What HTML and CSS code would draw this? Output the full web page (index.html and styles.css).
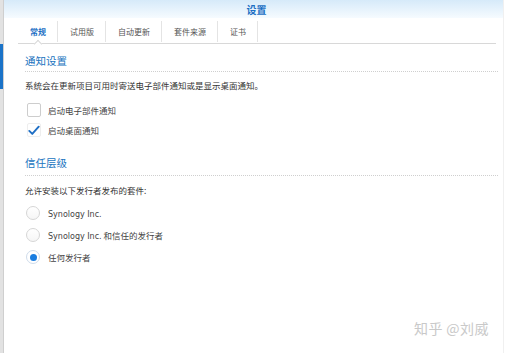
FILE: index.html
```html
<!DOCTYPE html>
<html lang="zh-CN">
<head>
<meta charset="utf-8">
<title>设置</title>
<link rel="stylesheet" href="styles.css">
</head>
<body>
<div class="window">
  <div class="edge"><div class="edge-active"></div></div>
  <div class="main">
    <div class="titlebar">设置</div>
    <div class="tabs">
      <div class="tab active">常规</div>
      <div class="tab">试用版</div>
      <div class="tab">自动更新</div>
      <div class="tab">套件来源</div>
      <div class="tab">证书</div>
    </div>
    <div class="content">
      <div class="section-title first">通知设置</div>
      <div class="desc">系统会在更新项目可用时寄送电子部件通知或是显示桌面通知。</div>
      <div class="row">
        <span class="checkbox"></span>
        <span class="label">启动电子部件通知</span>
      </div>
      <div class="row">
        <span class="checkbox checked">
          <svg width="14" height="13" viewBox="0 0 14 13"><path d="M1.5 7 L5 10.5 L12.5 2" fill="none" stroke="#1f6fc5" stroke-width="2.2" stroke-linecap="round" stroke-linejoin="round"/></svg>
        </span>
        <span class="label">启动桌面通知</span>
      </div>

      <div class="section-title second">信任层级</div>
      <div class="desc desc2">允许安装以下发行者发布的套件:</div>
      <div class="radio-row first-radio">
        <span class="radio"></span>
        <span class="label"><span class="latin">Synology Inc.</span></span>
      </div>
      <div class="radio-row">
        <span class="radio"></span>
        <span class="label"><span class="latin">Synology Inc.</span> 和信任的发行者</span>
      </div>
      <div class="radio-row">
        <span class="radio selected"><span class="dot"></span></span>
        <span class="label">任何发行者</span>
      </div>
    </div>
  </div>
  <div class="watermark">知乎 @刘威</div>
</div>
</body>
</html>
```

FILE: styles.css
```css
html, body {
  margin: 0;
  padding: 0;
  background: #ffffff;
}

body {
  width: 510px;
  height: 353px;
  overflow: hidden;
  font-family: "Liberation Sans", "Noto Sans CJK SC", sans-serif;
  color: #333;
}

.window {
  position: relative;
  display: flex;
  flex-direction: row;
  width: 510px;
  height: 353px;
}

.edge {
  width: 3px;
  flex: 0 0 3px;
  background: #e2e2e2;
  border-right: 1px solid #cfcfcf;
}

.edge-active {
  margin-top: 44px;
  height: 45px;
  background: #1b73c8;
}

.main {
  flex: 1;
  display: flex;
  flex-direction: column;
  border-right: 1px solid #f0f0f0;
  margin-right: 6px;
}

.titlebar {
  height: 18px;
  line-height: 20px;
  text-align: center;
  padding-left: 6px;
  font-family: "Noto Sans CJK SC", sans-serif;
  font-size: 10px;
  font-weight: bold;
  color: #1b6fc4;
  background: linear-gradient(#d6eaf9, #f6fbff);
}

.tabs {
  display: flex;
  flex-direction: row;
  height: 25px;
  margin-left: 14px;
  margin-right: 7px;
  border-bottom: 1px solid #d8d8d8;
  align-items: center;
}

.tab {
  position: relative;
  height: 21px;
  line-height: 21px;
  padding: 0 11px 0 12px;
  border-right: 1px solid #e4e4e4;
  font-family: "Noto Sans CJK SC", sans-serif;
  font-size: 8px;
  color: #555;
  margin-top: 1px;
}

.tab.active {
  color: #1b6fc4;
  font-weight: bold;
}

.tab.active::after {
  content: "";
  position: absolute;
  left: 17px;
  bottom: -5px;
  width: 5px;
  height: 5px;
  background: #fff;
  border-left: 1px solid #d8d8d8;
  border-top: 1px solid #d8d8d8;
  transform: rotate(45deg);
}

.content {
  display: flex;
  flex-direction: column;
  padding-left: 21px;
  padding-right: 5px;
}

.section-title {
  font-family: "Noto Sans CJK SC", sans-serif;
  font-size: 10.5px;
  line-height: 14px;
  color: #2174c0;
  padding-bottom: 3px;
  border-bottom: 1px dotted #cfcfcf;
}

.section-title.first {
  margin-top: 10px;
}

.section-title.second {
  margin-top: 16px;
  padding-bottom: 5px;
}

.desc {
  font-family: "Noto Sans CJK SC", sans-serif;
  font-size: 8.5px;
  line-height: 12px;
  color: #333;
  margin-top: 7px;
}

.desc2 {
  margin-top: 8px;
}

.row {
  display: flex;
  flex-direction: row;
  align-items: center;
  height: 20px;
  padding-left: 2px;
}

.desc + .row {
  margin-top: 9px;
}

.checkbox {
  width: 12px;
  height: 12px;
  border: 1px solid #cdcdcd;
  border-radius: 2px;
  background: #fff;
  display: flex;
  align-items: center;
  justify-content: center;
  flex: 0 0 auto;
}

.checkbox.checked {
  border-color: #eeeeee;
}

.checkbox svg {
  display: block;
}

.label {
  margin-left: 7px;
  font-family: "Noto Sans CJK SC", sans-serif;
  font-size: 8.5px;
  color: #444;
}

.latin {
  font-family: "DejaVu Sans", "Noto Sans CJK SC", sans-serif;
  font-size: 8px;
}

.radio-row {
  display: flex;
  flex-direction: row;
  align-items: center;
  height: 22px;
  padding-left: 1px;
}

.radio-row.first-radio {
  margin-top: 6px;
}

.radio {
  width: 12px;
  height: 12px;
  border: 1px solid #d6d6d6;
  border-radius: 50%;
  background: linear-gradient(#ffffff, #f6f6f6);
  display: flex;
  align-items: center;
  justify-content: center;
  flex: 0 0 auto;
}

.radio.selected {
  border-color: #cfdceb;
  background: #fff;
}

.dot {
  width: 7px;
  height: 7px;
  border-radius: 50%;
  background: #1a7de0;
}

.radio-row .label {
  margin-left: 8px;
}

.watermark {
  position: absolute;
  left: 414px;
  top: 319px;
  font-family: "Noto Sans CJK SC", sans-serif;
  font-size: 14px;
  line-height: 18px;
  color: #c9c9c9;
  letter-spacing: 0.4px;
}
```
